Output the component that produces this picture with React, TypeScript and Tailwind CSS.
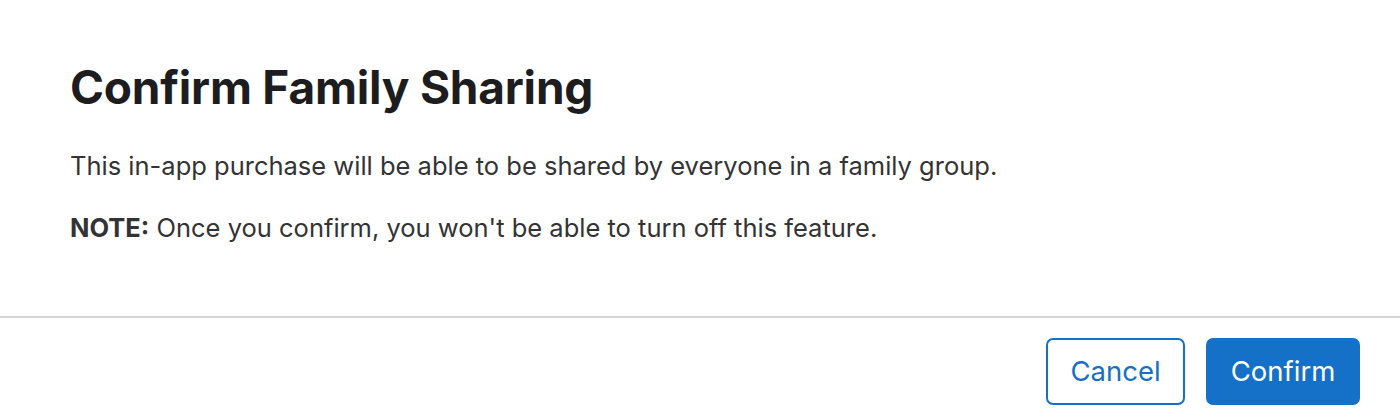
export default function App() {
  return (
    <div className="w-[1400px] h-[420px] bg-white flex flex-col font-['Inter','Liberation_Sans',sans-serif] antialiased">
      <div className="px-[70px] pt-[59px] h-[316px]">
        <h1 className="text-[46px] leading-[56px] font-bold text-[#1d1d1f] tracking-[-0.2px]">
          Confirm Family Sharing
        </h1>
        <p className="mt-[35px] text-[25.5px] leading-[32px] text-[#333336]">
          This in-app purchase will be able to be shared by everyone in a family group.
        </p>
        <p className="mt-[30px] text-[25.5px] leading-[32px] text-[#333336]">
          <span className="font-bold">NOTE:</span> Once you confirm, you won't be able to turn off this feature.
        </p>
      </div>
      <div className="h-[2px] bg-[#d6d6d6]" />
      <div className="flex justify-end gap-[21px] pr-[40px] pt-[20px]">
        <button className="w-[139px] h-[67px] rounded-[7px] border-2 border-[#1570c8] text-[#1570c8] text-[27.5px] bg-white">
          Cancel
        </button>
        <button className="w-[154px] h-[67px] rounded-[7px] bg-[#1570c8] text-white text-[27.5px]">
          Confirm
        </button>
      </div>
    </div>
  )
}
